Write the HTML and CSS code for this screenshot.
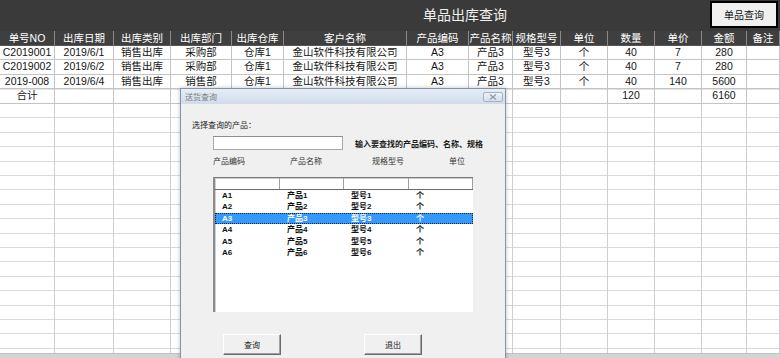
FILE: index.html
```html
<!DOCTYPE html>
<html lang="zh-CN">
<head>
	<meta charset="utf-8">
	<title>单品出库查询</title>
	<link rel="stylesheet" href="styles.css">
</head>
<body>
<div class="topbar">
	<h1 class="title">单品出库查询</h1>
	<button class="query-btn">单品查询</button>
</div>

<div class="sheet">
	<div class="hd">单号NO</div><div class="hd">出库日期</div><div class="hd">出库类别</div><div class="hd">出库部门</div><div class="hd">出库仓库</div><div class="hd">客户名称</div><div class="hd">产品编码</div><div class="hd">产品名称</div><div class="hd">规格型号</div><div class="hd">单位</div><div class="hd">数量</div><div class="hd">单价</div><div class="hd">金额</div><div class="hd">备注</div>

	<div>C2019001</div><div>2019/6/1</div><div>销售出库</div><div>采购部</div><div>仓库1</div><div>金山软件科技有限公司</div><div>A3</div><div>产品3</div><div>型号3</div><div>个</div><div>40</div><div>7</div><div>280</div><div></div>

	<div>C2019002</div><div>2019/6/2</div><div>销售出库</div><div>采购部</div><div>仓库1</div><div>金山软件科技有限公司</div><div>A3</div><div>产品3</div><div>型号3</div><div>个</div><div>40</div><div>7</div><div>280</div><div></div>

	<div>2019-008</div><div>2019/6/4</div><div>销售出库</div><div>销售部</div><div>仓库1</div><div>金山软件科技有限公司</div><div>A3</div><div>产品3</div><div>型号3</div><div>个</div><div>40</div><div>140</div><div>5600</div><div></div>

	<div class="total">合计</div><div class="total"></div><div class="total"></div><div class="total"></div><div class="total"></div><div class="total"></div><div class="total"></div><div class="total"></div><div class="total"></div><div class="total"></div><div class="total">120</div><div class="total"></div><div class="total">6160</div><div class="total"></div>

	<!-- empty rows, one striped column each -->
	<div class="fill"></div><div class="fill"></div><div class="fill"></div><div class="fill"></div><div class="fill"></div><div class="fill"></div><div class="fill"></div><div class="fill"></div><div class="fill"></div><div class="fill"></div><div class="fill"></div><div class="fill"></div><div class="fill"></div><div class="fill"></div>
</div>
<div class="hscroll"></div>

<div class="dialog">
	<div class="dlg-title">
		<span>送货查询</span>
		<span class="dlg-close">
			<svg width="8" height="6" viewBox="0 0 8 6"><path d="M1 0.5L7 5.5M7 0.5L1 5.5" stroke="#8c96a3" stroke-width="1.1" fill="none"/></svg>
		</span>
	</div>
	<div class="dlg-body">
		<p class="dlg-label">选择查询的产品：</p>
		<div class="search-row">
			<input class="search-input" type="text">
			<span class="hint">输入要查找的产品编码、名称、规格</span>
		</div>
		<div class="col-labels"><span>产品编码</span><span>产品名称</span><span>规格型号</span><span>单位</span></div>
		<div class="listbox">
			<div class="lb-head"><span></span><span></span><span></span><span></span></div>
			<div class="lb-row"><span>A1</span><span>产品1</span><span>型号1</span><span>个</span></div>
			<div class="lb-row"><span>A2</span><span>产品2</span><span>型号2</span><span>个</span></div>
			<div class="lb-row selected"><span>A3</span><span>产品3</span><span>型号3</span><span>个</span></div>
			<div class="lb-row"><span>A4</span><span>产品4</span><span>型号4</span><span>个</span></div>
			<div class="lb-row"><span>A5</span><span>产品5</span><span>型号5</span><span>个</span></div>
			<div class="lb-row"><span>A6</span><span>产品6</span><span>型号6</span><span>个</span></div>
		</div>
		<div class="dlg-buttons">
			<button class="btn">查询</button>
			<button class="btn">退出</button>
		</div>
	</div>
</div>
</body>
</html>
```

FILE: styles.css
```css
* {
	box-sizing: border-box;
	margin: 0;
	padding: 0;
}

body {
	width: 780px;
	height: 358px;
	overflow: hidden;
	position: relative;
	background: #fff;
	font-family: "Liberation Sans", "Noto Sans CJK SC", sans-serif;
}

.topbar {
	height: 31px;
	background: #3a3a3a;
	display: flex;
	align-items: flex-start;
	padding-left: 220px;
}

.title {
	flex: 1;
	text-align: center;
	color: #f0f0f0;
	font-size: 14px;
	font-weight: normal;
	line-height: 31px;
}

.query-btn {
	width: 68px;
	height: 27px;
	margin: 1px 2px 0 0;
	border: 2px solid #000;
	background: #f0f0f0;
	font: 10px "Liberation Sans", "Noto Sans CJK SC", sans-serif;
	color: #111;
}


.sheet {
	display: grid;
	grid-template-columns: 55px 59px 57px 61px 52px 123px 62px 44px 48px 47px 47px 47px 45px 33px;
	grid-template-rows: 15px repeat(4, 14.4px) 249px;
	font-size: 10.5px;
	color: #151515;
}

.sheet > div {
	border-right: 1px solid #c4c4c4;
	border-bottom: 1px solid #c4c4c4;
	text-align: center;
	line-height: 13.4px;
	white-space: nowrap;
	overflow: hidden;
}

.sheet .hd {
	background: #3f3f3f;
	color: #fff;
	border-right-color: #8a8a8a;
	border-bottom-color: #555;
	line-height: 14px;
}

.sheet .total {
	box-shadow: inset 0 1px 0 #e2e2e2;
}

.sheet .fill {
	border-bottom: none;
	border-right-color: #cfcfcf;
	background: repeating-linear-gradient(to bottom, transparent 0, transparent 13.4px, #d9d9d9 13.4px, #d9d9d9 14.4px);
}

.hscroll {
	height: 6px;
	background: #d4d4d4;
	border-top: 1px solid #c0c0c0;
}


.dialog {
	position: absolute;
	left: 180px;
	top: 88px;
	width: 326px;
	height: 276px;
	background: #f0f0f0;
	border: 1px solid #8494a8;
	box-shadow: 0 0 4px rgba(0,0,0,0.25);
	font-size: 8px;
	color: #222;
}

.dlg-title {
	height: 15px;
	display: flex;
	align-items: center;
	justify-content: space-between;
	padding: 0 2px 0 4px;
	background: linear-gradient(#e6edf6, #d0dcea);
	color: #7c7c7c;
}

.dlg-close {
	width: 20px;
	height: 10px;
	display: flex;
	align-items: center;
	justify-content: center;
	border: 1px solid #a7b2c0;
	border-radius: 2px;
	background: linear-gradient(#eef2f7, #d6dee8);
}

.dlg-label {
	margin: 17px 0 0 11px;
	line-height: 10px;
}

.search-row {
	display: flex;
	align-items: center;
	margin-top: 5px;
	padding-left: 32px;
}

.search-input {
	width: 130px;
	height: 14px;
	background: #fff;
	border: 1px solid #a9a9a9;
	border-top-color: #8e8e8e;
}

.hint {
	margin-left: 12px;
	font-weight: bold;
	color: #1a1a1a;
}

.col-labels {
	display: grid;
	grid-template-columns: 77px 82px 77px auto;
	margin-top: 7px;
	padding-left: 32px;
	line-height: 10px;
	color: #333;
}

.listbox {
	width: 260px;
	height: 135px;
	margin: 10px 0 0 32px;
	background: #fff;
	border-top: 1px solid #7a7a7a;
	border-left: 2px solid #8c8c8c;
	box-shadow: inset 1px 1px 0 #cfcfcf;
}

.lb-head,
.lb-row {
	display: grid;
	grid-template-columns: 65px 64px 65px 1fr;
}

.lb-head {
	height: 12px;
	border-bottom: 1px solid #6a6a6a;
}

.lb-head span {
	border-right: 1px solid #a0a0a0;
}

.lb-row {
	height: 11.4px;
	line-height: 11.4px;
	font-weight: bold;
	color: #111;
}

.lb-row span {
	padding-left: 7px;
	white-space: nowrap;
}

.lb-row.selected {
	background: #3399ff;
	color: #fff;
	outline: 1px dotted #222;
	outline-offset: -1px;
}

.dlg-buttons {
	display: flex;
	gap: 83px;
	margin-top: 22px;
	padding-left: 42px;
}

.btn {
	width: 58px;
	height: 21px;
	font: inherit;
	color: #222;
	background: #f0f0f0;
	border: 1px solid;
	border-color: #fff #6a6a6a #6a6a6a #fff;
	box-shadow: inset -1px -1px 0 #a0a0a0;
}
```
